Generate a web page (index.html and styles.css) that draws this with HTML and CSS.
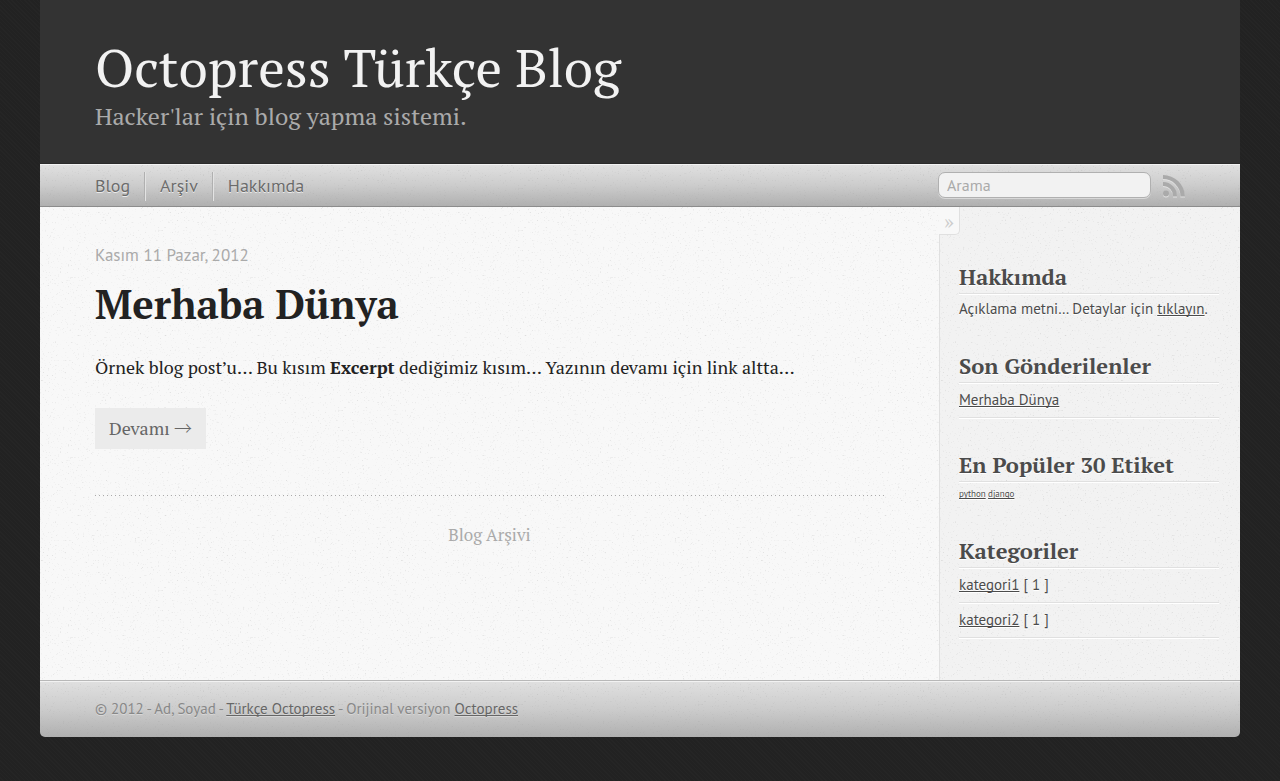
FILE: index.html
```html
<!DOCTYPE html>
<html lang="tr">
<head>
<meta charset="utf-8">
<meta name="viewport" content="width=device-width, initial-scale=1">
<title>Octopress Türkçe Blog</title>
<link rel="stylesheet" href="styles.css">
</head>
<body>
<div class="page">
  <header class="site-header">
    <h1 class="site-title"><a href="#">Octopress Türkçe Blog</a></h1>
    <p class="site-subtitle">Hacker'lar için blog yapma sistemi.</p>
  </header>
  <nav class="site-nav">
    <ul class="menu">
      <li><a href="#">Blog</a></li>
      <li><a href="#">Arşiv</a></li>
      <li><a href="#">Hakkımda</a></li>
    </ul>
    <form class="search" role="search">
      <input class="search-box" type="text" name="q" placeholder="Arama" aria-label="Arama">
    </form>
    <a class="rss" href="#" aria-label="RSS">
      <svg width="22" height="23" viewBox="0 0 22 23" aria-hidden="true">
        <g class="rss-light" transform="translate(0 1)"><circle cx="3" cy="18.500" r="3"/><path d="M0 7v4a10 10 0 0 1 10 10.500h4A14 14 0 0 0 0 7zM0 0v4a17.500 17.500 0 0 1 17.500 17.500h4.500A22 22 0 0 0 0 0z"/></g>
        <g class="rss-dark"><circle cx="3" cy="18.500" r="3"/><path d="M0 7v4a10 10 0 0 1 10 10.500h4A14 14 0 0 0 0 7zM0 0v4a17.500 17.500 0 0 1 17.500 17.500h4.500A22 22 0 0 0 0 0z"/></g>
      </svg>
    </a>
  </nav>
  <div class="columns">
    <main class="content">
      <article class="post">
        <time class="post-date" datetime="2012-11-11">Kasım 11 Pazar, 2012</time>
        <h2 class="post-title"><a href="#">Merhaba Dünya</a></h2>
        <p class="post-text">Örnek blog post’u… Bu kısım <strong>Excerpt</strong> dediğimiz kısım… Yazının devamı için link altta…</p>
        <a class="more" href="#">Devamı <span class="arrow">→</span></a>
      </article>
      <div class="pager"><a href="#">Blog Arşivi</a></div>
    </main>
    <aside class="sidebar">
      <button class="toggle" type="button" aria-label="Kenar çubuğunu gizle">»</button>
      <section class="widget">
        <h3>Hakkımda</h3>
        <p>Açıklama metni… Detaylar için <a href="#">tıklayın</a>.</p>
      </section>
      <section class="widget">
        <h3>Son Gönderilenler</h3>
        <ul><li><a href="#">Merhaba Dünya</a></li></ul>
      </section>
      <section class="widget">
        <h3>En Popüler 30 Etiket</h3>
        <p class="tags"><a href="#">python</a> <a href="#">django</a></p>
      </section>
      <section class="widget">
        <h3>Kategoriler</h3>
        <ul>
          <li><a href="#">kategori1</a> [ 1 ]</li>
          <li><a href="#">kategori2</a> [ 1 ]</li>
        </ul>
      </section>
    </aside>
  </div>
  <footer class="site-footer">
    <p>© 2012 - Ad, Soyad - <a href="#">Türkçe Octopress</a> - Orijinal versiyon <a href="#">Octopress</a></p>
  </footer>
</div>
</body>
</html>
```
FILE: styles.css
```css
:root {
  --serif: "PT Serif", "Liberation Serif", serif;
  --sans: "PT Sans", Lato, sans-serif;
  --noise: url("data:image/svg+xml,%3Csvg xmlns='http://www.w3.org/2000/svg' width='180' height='180'%3E%3Cfilter id='n' x='0' y='0' width='100%25' height='100%25'%3E%3CfeTurbulence type='fractalNoise' baseFrequency='.6' numOctaves='2' stitchTiles='stitch'/%3E%3CfeColorMatrix values='0 0 0 0 .3 0 0 0 0 .3 0 0 0 0 .3 1 0 0 0 -.64'/%3E%3C/filter%3E%3Crect width='180' height='180' filter='url(%23n)'/%3E%3C/svg%3E");
}
* { box-sizing: border-box; }
body {
  margin: 0;
  padding: 0 40px 44px;
  background: #232323 repeating-linear-gradient(45deg, #222 0 2px, #252525 2px 3px);
  color: #222;
  font-family: var(--serif);
  font-variant-numeric: lining-nums;
}
h1, h2, h3, p, ul { margin: 0; padding: 0; }
ul { list-style: none; }
a { color: inherit; text-decoration-skip-ink: none; }
.page { max-width: 1200px; margin: 0 auto; border-radius: 0 0 5px 5px; overflow: hidden; }

.site-header { padding: 36px 55px 31px; background: #333; border-bottom: 1px solid #2b2b2b; }
.site-title { font-size: 53px; line-height: 62px; font-weight: 400; color: #f2f2f2; }
.site-title a, .menu a, .post-title a, .pager a, .more { text-decoration: none; }
.site-subtitle { padding-top: 2px; font-size: 24px; line-height: 32px; color: #aaa; }

.site-nav {
  display: flex;
  align-items: flex-start;
  padding: 7px 55px 5px;
  border-top: 1px solid #f2f2f2;
  border-bottom: 1px solid #8c8c8c;
  background: var(--noise), linear-gradient(#e0e0e0, #ccc 50%, #b0b0b0);
  font-family: var(--sans);
}
.menu { display: flex; flex: 1; font-size: 18px; line-height: 27px; color: #6b6b6b; text-shadow: 0 1px #ebebeb; }
.menu li { padding-bottom: 2px; }
.menu li + li { margin-left: 14px; padding-left: 15px; border-left: 1px solid #b0b0b0; box-shadow: inset 1px 0 #e3e3e3; }
.search-box {
  display: block;
  width: 213px;
  height: 26px;
  padding: 0 8px;
  border: 1px solid #b0b0b0;
  border-radius: 7px;
  background: #f2f2f2;
  box-shadow: 0 1px #d8d8d8;
  font: 16px var(--sans);
  color: #555;
}
.search-box::placeholder { color: #aaa; opacity: 1; }
.rss { margin-left: 12px; padding-top: 3px; }
.rss svg { display: block; }
.rss-light { fill: #e2e2e2; }
.rss-dark { fill: #aaa; }

.columns { display: flex; background: var(--noise), #f8f8f8; }
.content { flex: 1; min-width: 0; }
.post {
  margin: 0 52px 0 55px;
  padding: 36px 0 47px;
  background: repeating-linear-gradient(90deg, #aaa 0 1px, transparent 1px 4px) bottom / 100% 1px no-repeat;
}
.post-date { display: block; font: 17px/24px var(--sans); color: #aaa; }
.post-title { margin-top: 13px; font-size: 40px; line-height: 48px; }
.post-text { margin-top: 24px; font-size: 18px; line-height: 30px; }
.more { display: inline-block; margin-top: 26px; padding: 0 14px; background: #ebebeb; color: #666; font-size: 18px; line-height: 41px; }
.arrow { font-family: "Noto Sans CJK JP", sans-serif; font-weight: 300; line-height: 1; }
.pager { padding: 26px 55px; text-align: center; font-size: 17px; line-height: 26px; color: #aaa; }

.sidebar {
  position: relative;
  width: 301px;
  padding: 56px 21px 42px 19px;
  border-left: 1px solid #e0e0e0;
  background: var(--noise), #f2f2f2;
  color: #4b4b4b;
  font: 15px/22px var(--sans);
  text-shadow: 0 1px #fff;
}
.toggle {
  position: absolute;
  top: 0;
  left: -1px;
  width: 21px;
  height: 28px;
  padding: 0 0 3px;
  border: solid #e0e0e0;
  border-width: 0 1px 1px 0;
  border-radius: 0 0 5px;
  background: #f8f8f8;
  color: #ccc;
  font: 21px var(--serif);
}
.widget + .widget { margin-top: 33px; }
.widget h3 { padding-bottom: 3px; border-bottom: 1px solid #e0e0e0; box-shadow: 0 1px #fff; font: bold 22px/27px var(--serif); font-variant-numeric: lining-nums; }
.widget p { padding-top: 4px; line-height: 21px; }
.widget li { padding: 6px 0; border-bottom: 1px solid #e0e0e0; box-shadow: 0 1px #fff; }
.widget .tags { padding: 3px 0 2px; font-size: 9px; line-height: 17px; }

.site-footer {
  padding: 16px 55px 17px;
  border-top: 1px solid #b8b8b8;
  background: var(--noise), linear-gradient(#e0e0e0, #ccc 50%, #b0b0b0);
  box-shadow: inset 0 1px #f2f2f2;
  color: #888;
  font: 15px/23px var(--sans);
  text-shadow: 0 1px #d8d8d8;
}
.site-footer a { color: #666; }
```
